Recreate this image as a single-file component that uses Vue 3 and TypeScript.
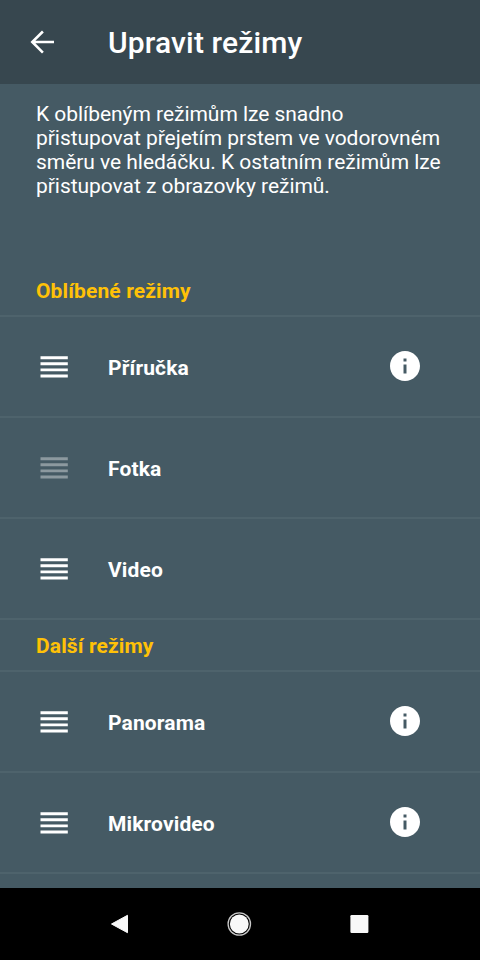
<script setup lang="ts">
interface Mode { name: string; info?: boolean; locked?: boolean }
interface Section { title: string; modes: Mode[] }

const sections: Section[] = [
  { title: 'Oblíbené režimy', modes: [{ name: 'Příručka', info: true }, { name: 'Fotka', locked: true }, { name: 'Video' }] },
  { title: 'Další režimy', modes: [{ name: 'Panorama', info: true }, { name: 'Mikrovideo', info: true }] },
]
const intro = [
  'K oblíbeným režimům lze snadno',
  'přistupovat přejetím prstem ve vodorovném',
  'směru ve hledáčku. K ostatním režimům lze',
  'přistupovat z obrazovky režimů.',
]
</script>

<template>
  <div class="screen">
    <header class="bar">
      <svg class="back" viewBox="0 0 24 24"><path d="M20 11.200H7.600l5.600-5.600L12 4.300 4.300 12l7.700 7.700 1.200-1.200L7.600 12.900H20v-1.700z" /></svg>
      <h1>Upravit režimy</h1>
    </header>
    <main class="content">
      <p class="intro"><span v-for="line in intro" :key="line">{{ line }}</span></p>
      <section v-for="section in sections" :key="section.title">
        <h2>{{ section.title }}</h2>
        <div v-for="mode in section.modes" :key="mode.name" class="row">
          <svg class="handle" :class="{ locked: mode.locked }" viewBox="0 0 28 22">
            <path d="M.5 .3h27.300v2.900H.5zM.5 6.300h27.300v2.900H.5zM.5 12.400h27.300v2.900H.5zM.5 18.500h27.300v2.900H.5z" />
          </svg>
          <span class="name">{{ mode.name }}</span>
          <svg v-if="mode.info" class="info" viewBox="0 0 24 24">
            <path d="M12 2C6.480 2 2 6.480 2 12s4.480 10 10 10 10-4.480 10-10S17.520 2 12 2zm1 15h-2v-6h2v6zm0-8h-2V7h2v2z" />
          </svg>
        </div>
      </section>
      <div class="end"></div>
    </main>
    <nav class="nav">
      <svg viewBox="0 0 36 36"><path d="M26.500 9.300v17.400L10.500 18z" stroke="#f8f8f8" stroke-linejoin="round" /></svg>
      <svg viewBox="0 0 36 36"><circle cx="18.300" cy="18" r="9.400" /><circle cx="18.300" cy="18" r="11.200" fill="none" stroke="#c8c8c8" stroke-width="1.300" /></svg>
      <svg viewBox="0 0 36 36"><rect x="9.400" y="9" width="18" height="18" rx="1.200" /></svg>
    </nav>
  </div>
</template>

<style>
body { margin: 0; background: #000; }
</style>

<style scoped>
.screen { width: 480px; height: 960px; display: flex; flex-direction: column; overflow: hidden; background: #455a64; color: #fff; font-family: Roboto, sans-serif; }
.bar { height: 84px; flex: none; display: flex; align-items: center; background: #37474f; }
.back { width: 36px; height: 36px; margin-left: 24px; fill: #fff; }
h1 { margin: 2px 0 0 48px; font-size: 30px; font-weight: 500; line-height: 36px; letter-spacing: .14px; }
.content { flex: 1; min-height: 0; overflow: hidden; }
.intro { margin: 0; padding: 18px 0 0 36px; height: 162px; font-size: 21px; line-height: 24px; white-space: nowrap; letter-spacing: -.04px; }
.intro span { display: block; }
h2 { box-sizing: border-box; height: 51px; margin: 0; padding-left: 36px; font-size: 21px; font-weight: 700; line-height: 55px; letter-spacing: .12px; color: #ffc107; }
.row { box-sizing: border-box; height: 101px; display: flex; align-items: center; border-top: 2px solid #4e636c; }
.handle { width: 28px; height: 22px; margin-left: 40px; fill: #fff; }
.handle.locked { fill: #8c999f; }
.name { margin: 2px 0 0 40px; font-size: 21px; font-weight: 700; line-height: 24px; letter-spacing: .14px; }
.info { width: 36px; height: 36px; margin: 0 57px 2px auto; fill: #fff; }
.end { border-top: 2px solid #4e636c; }
section + section { border-top: 2px solid #4e636c; }
section + section h2 { height: 50px; line-height: 53px; }
.nav { height: 72px; flex: none; display: flex; justify-content: center; gap: 84px; padding-right: 2px; background: #000; }
.nav svg { width: 36px; height: 36px; margin-top: 18px; fill: #f8f8f8; }
</style>
